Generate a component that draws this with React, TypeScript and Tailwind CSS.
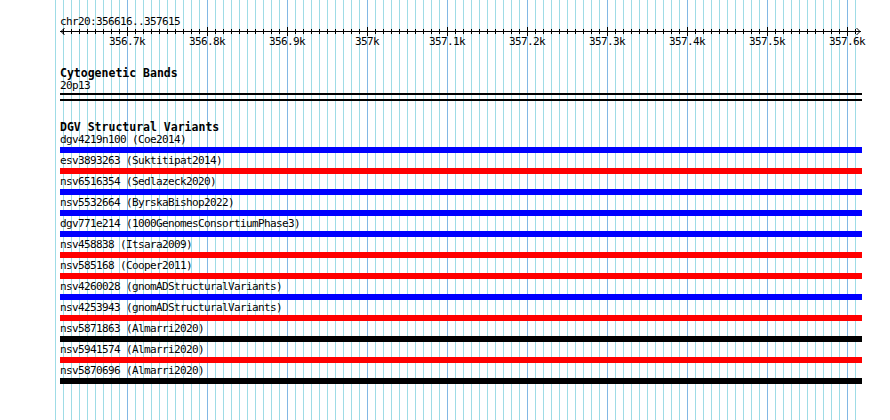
import React from "react";

const minorXs: number[] = [];
for (let x = 55; x <= 855; x += 8) minorXs.push(x);
const majorXs: number[] = [];
for (let x = 127; x <= 847; x += 80) majorXs.push(x);

const labels = ["356.7k", "356.8k", "356.9k", "357k", "357.1k", "357.2k", "357.3k", "357.4k", "357.5k", "357.6k"];

const rows: { name: string; color: string }[] = [
  { name: "dgv4219n100 (Coe2014)", color: "bg-[#0000ff]" },
  { name: "esv3893263 (Suktitipat2014)", color: "bg-[#ff0000]" },
  { name: "nsv6516354 (Sedlazeck2020)", color: "bg-[#0000ff]" },
  { name: "nsv5532664 (ByrskaBishop2022)", color: "bg-[#0000ff]" },
  { name: "dgv771e214 (1000GenomesConsortiumPhase3)", color: "bg-[#0000ff]" },
  { name: "nsv458838 (Itsara2009)", color: "bg-[#ff0000]" },
  { name: "nsv585168 (Cooper2011)", color: "bg-[#ff0000]" },
  { name: "nsv4260028 (gnomADStructuralVariants)", color: "bg-[#0000ff]" },
  { name: "nsv4253943 (gnomADStructuralVariants)", color: "bg-[#ff0000]" },
  { name: "nsv5871863 (Almarri2020)", color: "bg-black" },
  { name: "nsv5941574 (Almarri2020)", color: "bg-[#ff0000]" },
  { name: "nsv5870696 (Almarri2020)", color: "bg-black" },
];

function Grid() {
  return (
    <svg className="absolute inset-0" width={890} height={420} shapeRendering="crispEdges">
      {minorXs.map((x) => (
        <rect key={"m" + x} x={x} y={0} width={1} height={420} fill="#9fdce6" />
      ))}
      {majorXs.map((x) => (
        <rect key={"M" + x} x={x} y={0} width={1} height={420} fill="#82b8e4" />
      ))}
    </svg>
  );
}

function Ruler() {
  const ticks: number[] = [];
  for (let x = 63; x <= 855; x += 8) ticks.push(x - 60);
  return (
    <svg width={802} height={10} shapeRendering="crispEdges" className="block">
      <line x1={0} x2={801} y1={5.5} y2={5.5} stroke="#000" strokeWidth={1} />
      {ticks.map((t) => {
        const major = (t + 60 - 127) % 80 === 0;
        return (
          <line
            key={t}
            x1={t + 0.5}
            x2={t + 0.5}
            y1={major ? 1 : 3}
            y2={major ? 10 : 8}
            stroke="#000"
            strokeWidth={1}
          />
        );
      })}
      <path d="M4.5 2 L1 5.5 L4.5 9" fill="none" stroke="#000" strokeWidth={1} shapeRendering="auto" />
      <path d="M796.5 2 L800 5.5 L796.5 9" fill="none" stroke="#000" strokeWidth={1} shapeRendering="auto" />
    </svg>
  );
}

const txt = "text-[11px] tracking-[-0.62px] leading-[12px] whitespace-nowrap";

export default function App() {
  return (
    <div className="relative w-[890px] h-[420px] bg-white overflow-hidden text-black font-['DejaVu_Sans_Mono','Liberation_Mono',monospace]">
      <Grid />
      <div className="relative flex flex-col pl-[60px] pt-[16px]">
        <div className={"h-[10px] " + txt}>chr20:356616..357615</div>
        <Ruler />
        <div className="flex h-[12px] ml-[49px] gap-[44px]">
          {labels.map((l) => (
            <div key={l} className={"w-[36px] text-center " + txt}>
              {l}
            </div>
          ))}
        </div>
        <div className="mt-[19px] h-[12px] text-[11.5px] leading-[12px] font-bold whitespace-nowrap">Cytogenetic Bands</div>
        <div className={"mt-[1px] h-[12px] " + txt}>20p13</div>
        <div className="mt-[1px] h-[2px] w-[802px] bg-black" />
        <div className="mt-[4px] h-[2px] w-[802px] bg-black" />
        <div className="mt-[20px] h-[12px] text-[11.5px] leading-[12px] font-bold whitespace-nowrap">DGV Structural Variants</div>
        <div className="mt-[1px] flex flex-col">
          {rows.map((r) => (
            <div key={r.name} className="flex flex-col pb-[2px]">
              <div className={"h-[12px] " + txt}>{r.name}</div>
              <div className={"mt-[1px] h-[6px] w-[802px] " + r.color} />
            </div>
          ))}
        </div>
      </div>
    </div>
  );
}
